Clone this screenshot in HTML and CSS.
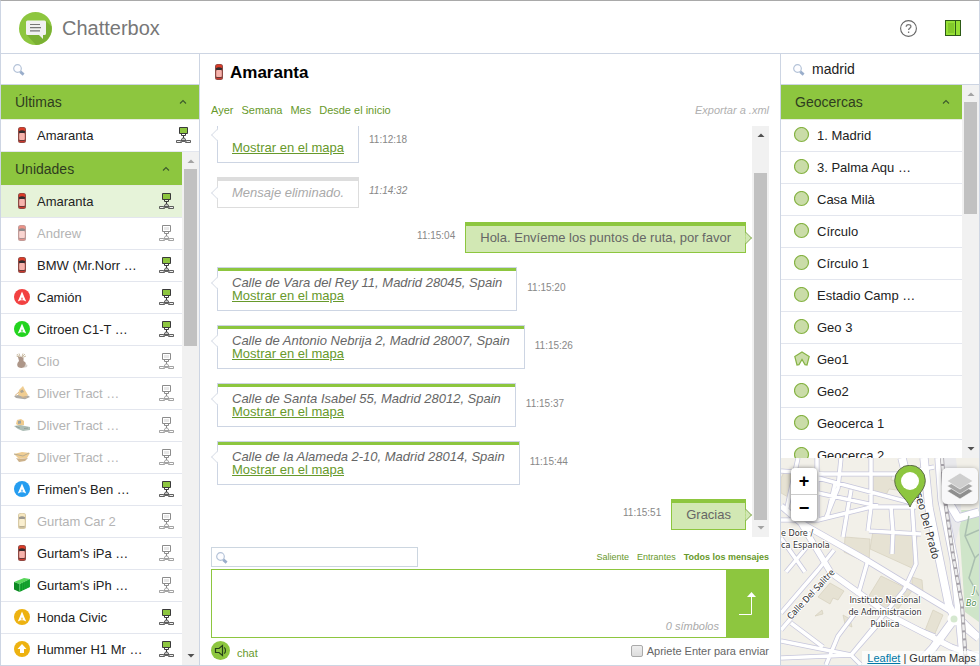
FILE: index.html
```html
<!DOCTYPE html>
<html lang="es">
  <head>
    <meta charset="UTF-8" />
    <meta name="viewport" content="width=device-width, initial-scale=1.0" />
    <title>Chatterbox</title>
    <link rel="stylesheet" href="styles.css">
  </head>
  <body>
    <!-- Icon sprite -->
    <svg class="sprite" aria-hidden="true">
      <symbol id="search" viewBox="0 0 12 12">
        <circle cx="4.5" cy="4.5" r="3.8" fill="#fdfdff" stroke="#b4c3d8" stroke-width="1.2" />
        <path d="M7.2 7.6l3.4 3" stroke="#9aaecb" stroke-width="2.8" />
      </symbol>
      <symbol id="chevron" viewBox="0 0 8 8">
        <path d="M1 5.5L4 2.5l3 3" fill="none" stroke="#3c5a2c" stroke-width="1.1" />
      </symbol>
      <symbol id="up" viewBox="0 0 8 4"><path d="M.5 4L4 .4 7.5 4z" fill="currentColor" /></symbol>
      <symbol id="down" viewBox="0 0 8 4"><path d="M.5 0h7L4 3.6z" fill="currentColor" /></symbol>
      <symbol id="car" viewBox="0 0 16 16">
        <rect x="4" y="0" width="8" height="16" rx="2.5" fill="#8d4a44" />
        <path d="M5 1.5Q8-.3 11 1.5V4H5z" fill="#dc3c28" />
        <path d="M4.8 4.2Q8 2.4 11.2 4.2L10.5 6.5h-5z" fill="#332c2e" />
        <rect x="5.2" y="6" width="5.6" height="7" rx="1" fill="#f7b3ac" />
        <path d="M5.6 13.2h4.800l.4 1H5.200z" fill="#5b3230" />
        <path d="M5.2 14.6h5.6" stroke="#d6392c" />
      </symbol>
      <symbol id="car-yellow" viewBox="0 0 16 16">
        <rect x="4" y="0" width="8" height="16" rx="2.5" fill="#b99f5c" />
        <path d="M5 1.5Q8-.3 11 1.5V4H5z" fill="#f0d58c" />
        <path d="M4.8 4.2Q8 2.4 11.2 4.2L10.5 6.5h-5z" fill="#4a4436" />
        <rect x="5.2" y="6" width="5.6" height="7" rx="1" fill="#f7e2ab" />
        <path d="M5.6 13.2h4.800l.4 1H5.200z" fill="#6d5b32" />
      </symbol>
      <symbol id="nav" viewBox="0 0 16 16">
        <circle cx="8" cy="8" r="8" fill="currentColor" />
        <path d="M8 2.6l4.200 9.800-2.800-1.200H6.600L3.800 12.400z" fill="#fff" />
        <path d="M8 8l1 2.400H7z" fill="currentColor" />
      </symbol>
      <symbol id="nav-arrow" viewBox="0 0 16 16">
        <circle cx="8" cy="8" r="8" fill="currentColor" />
        <path d="M8 3l4.5 5H10v4H6V8H3.5z" fill="#fff" />
      </symbol>
      <symbol id="deer" viewBox="0 0 16 16">
        <path d="M3 1l2 3M5 .5l1 3M11 1L8 4M9 .5l-1 3M2.500 3l3 1.500M12 3L8.500 4.500" stroke="#8a6a34" stroke-width=".8" />
        <path d="M4 4l3-.6L9.500 5v3Q13 9.500 11.500 13.500Q8 16 4 14Q2 11 5 8z" fill="#6b4127" />
        <path d="M11.500 11l2 1-.5 2-3 .8z" fill="#b5aaa0" />
      </symbol>
      <symbol id="digger" viewBox="0 0 16 16">
        <path d="M0 11l4-1 10 .5 2 1.500-5 2.200L2 13z" fill="#6d675c" />
        <path d="M4 10l1-5 4-4 2 4 3 5-5 2z" fill="#e5a63a" />
        <path d="M6 6l2.500-1.500L10 7 7 8z" fill="#675a3e" />
        <path d="M1 10.500l4-3.500M8 12h5" stroke="#bd7a20" />
      </symbol>
      <symbol id="loader" viewBox="0 0 16 16">
        <path d="M3 3l4-1 3 2v4L5 9 2 7z" fill="#e3a133" />
        <path d="M4 4l3-.6v3L4 7z" fill="#4e5b57" />
        <path d="M0 9l6-1 10 2v3L9 14 4 12z" fill="#6b8a7c" />
        <path d="M2 9.500l4 1.500M10 11.500l4-.5" stroke="#3e5148" />
      </symbol>
      <symbol id="truck" viewBox="0 0 16 16">
        <path d="M0 5l8-2 8 1-3 5-8 1z" fill="#e2a53c" />
        <path d="M0 5l9 2 6-3" fill="none" stroke="#7f6938" />
        <path d="M2 9l4 1 8-1-3 3-6 1z" fill="#a3722b" />
      </symbol>
      <symbol id="container" viewBox="0 0 16 16">
        <path d="M0 5l10-4 6 1L5.500 7z" fill="#58d65a" />
        <path d="M0 5l5.500 2v8L0 12.500z" fill="#0c8a22" />
        <path d="M5.500 7L16 2v8L5.500 15z" fill="#19aa32" />
        <path d="M7.500 6.500V14M9.700 5.500V13M11.900 4.500v7.300M14 3.500v7.300" stroke="#0f8d26" stroke-width=".7" />
      </symbol>
      <symbol id="net" viewBox="0 0 16 16">
        <path d="M3.500.5h8v6h-8z" fill="#8dc63f" stroke="#3a3a3a" />
        <path d="M5.500 7v1.500h4V7M7.500 9v2" fill="none" stroke="#3a3a3a" />
        <path d="M6.500 11h2l1.500 2.500H5z" fill="#ccc" stroke="#3a3a3a" stroke-width=".8" />
        <path d="M.5 13.500h4l1 2h-5zM14.500 13.500h-4l-1 2h5zM5.500 14.500h4" fill="#eee" stroke="#3a3a3a" stroke-width=".8" />
      </symbol>
      <symbol id="net-off" viewBox="0 0 16 16">
        <path d="M3.500.5h8v6h-8z" fill="#fff" stroke="#8c8c8c" />
        <path d="M5 2h5v3H5z" fill="#e8e8e8" />
        <path d="M5.500 7v1.500h4V7M7.500 9v2" fill="none" stroke="#8c8c8c" />
        <path d="M6.500 11h2l1.500 2.500H5z" fill="#fff" stroke="#8c8c8c" stroke-width=".8" />
        <path d="M.5 13.500h4l1 2h-5zM14.500 13.500h-4l-1 2h5zM5.500 14.500h4" fill="#fff" stroke="#8c8c8c" stroke-width=".8" />
      </symbol>
      <symbol id="circle" viewBox="0 0 16 16">
        <circle cx="7.500" cy="7.500" r="7" fill="#cadca8" stroke="#86b344" stroke-width="1.200" />
      </symbol>
      <symbol id="polygon" viewBox="0 0 16 16">
        <path d="M8 .9l7.200 4.600-2.200 8.500-2-.4L8 8.500l-3 5.100-2 .4L.8 5.500z" fill="#cadca8" stroke="#86b344" stroke-width="1.200" />
      </symbol>
    </svg>

    <div class="app">
      <header class="header">
        <svg class="header__logo" viewBox="0 0 33 33" aria-hidden="true">
          <circle cx="16.500" cy="16.500" r="16.500" fill="#8dc63f" />
          <path d="M27 9l5.500 5.500A16.500 16.500 0 0 1 17 33L7 22z" fill="#7ab033" />
          <path d="M8.500 8.500h17a1.500 1.500 0 0 1 1.500 1.500v11.500a1.500 1.500 0 0 1-1.500 1.500H24v4l-4-4H8.500A1.500 1.500 0 0 1 7 21.500V10a1.500 1.500 0 0 1 1.500-1.500z" fill="#f1f1f1" />
          <path d="M11 12.500h10M11 15.700h11M11 18.900h10" stroke="#777" stroke-width="1.200" />
        </svg>
        <h1 class="header__title">Chatterbox</h1>
        <button class="header__button" type="button" aria-label="Ayuda">
          <svg class="header__icon" viewBox="0 0 17 17">
            <circle cx="8.500" cy="8.500" r="7.900" fill="#fff" stroke="#666" stroke-width="1.100" />
            <path d="M6.200 6.800c0-3 4.700-2.900 4.700-.3 0 1.700-2.300 1.800-2.300 3.500M8.600 11.500v1.400" fill="none" stroke="#777" stroke-width="1.300" />
          </svg>
        </button>
        <button class="header__button" type="button" aria-label="Mostrar panel">
          <svg class="header__icon" viewBox="0 0 17 17">
            <rect x=".5" y=".5" width="15" height="15" fill="#96e035" stroke="#2d5a17" />
            <rect x="3" y="3" width="6" height="10" fill="#82c92b" />
            <path d="M10.500 1v15" stroke="#2d5a17" />
          </svg>
        </button>
      </header>

      <main class="columns">
        <aside class="panel">
          <label class="search">
            <svg class="search__icon"><use href="#search" /></svg>
            <input class="search__input" type="text" aria-label="Buscar unidades" />
          </label>
          <section class="section">
            <button class="section__title" type="button">Últimas <svg class="chevron"><use href="#chevron" /></svg></button>
            <ul class="list">
              <li><button class="item" type="button"><svg class="icon"><use href="#car" /></svg><span>Amaranta</span><svg class="icon"><use href="#net" /></svg></button></li>
            </ul>
          </section>
          <div class="scroll">
            <section class="section">
              <button class="section__title" type="button">Unidades <svg class="chevron"><use href="#chevron" /></svg></button>
              <ul class="list">
                <li><button class="item item--active" type="button"><svg class="icon"><use href="#car" /></svg><span>Amaranta</span><svg class="icon"><use href="#net" /></svg></button></li>
                <li><button class="item item--off" type="button"><svg class="icon"><use href="#car" /></svg><span>Andrew</span><svg class="icon"><use href="#net-off" /></svg></button></li>
                <li><button class="item" type="button"><svg class="icon"><use href="#car" /></svg><span>BMW (Mr.Norr …</span><svg class="icon"><use href="#net" /></svg></button></li>
                <li><button class="item" type="button"><svg class="icon icon--red"><use href="#nav" /></svg><span>Camión</span><svg class="icon"><use href="#net" /></svg></button></li>
                <li><button class="item" type="button"><svg class="icon icon--green"><use href="#nav" /></svg><span>Citroen C1-T …</span><svg class="icon"><use href="#net" /></svg></button></li>
                <li><button class="item item--off" type="button"><svg class="icon"><use href="#deer" /></svg><span>Clio</span><svg class="icon"><use href="#net-off" /></svg></button></li>
                <li><button class="item item--off" type="button"><svg class="icon"><use href="#digger" /></svg><span>Dliver Tract …</span><svg class="icon"><use href="#net-off" /></svg></button></li>
                <li><button class="item item--off" type="button"><svg class="icon"><use href="#loader" /></svg><span>Dliver Tract …</span><svg class="icon"><use href="#net-off" /></svg></button></li>
                <li><button class="item item--off" type="button"><svg class="icon"><use href="#truck" /></svg><span>Dliver Tract …</span><svg class="icon"><use href="#net-off" /></svg></button></li>
                <li><button class="item" type="button"><svg class="icon icon--blue"><use href="#nav" /></svg><span>Frimen's Ben …</span><svg class="icon"><use href="#net" /></svg></button></li>
                <li><button class="item item--off" type="button"><svg class="icon"><use href="#car-yellow" /></svg><span>Gurtam Car 2</span><svg class="icon"><use href="#net-off" /></svg></button></li>
                <li><button class="item" type="button"><svg class="icon"><use href="#car" /></svg><span>Gurtam's iPa …</span><svg class="icon"><use href="#net-off" /></svg></button></li>
                <li><button class="item" type="button"><svg class="icon"><use href="#container" /></svg><span>Gurtam's iPh …</span><svg class="icon"><use href="#net-off" /></svg></button></li>
                <li><button class="item" type="button"><svg class="icon icon--amber"><use href="#nav" /></svg><span>Honda Civic</span><svg class="icon"><use href="#net" /></svg></button></li>
                <li><button class="item" type="button"><svg class="icon icon--amber"><use href="#nav-arrow" /></svg><span>Hummer H1 Mr …</span><svg class="icon"><use href="#net" /></svg></button></li>
              </ul>
            </section>
            <div class="bar">
              <svg class="bar__arrow bar__arrow--end"><use href="#up" /></svg>
              <div class="bar__track"><div class="bar__thumb" style="height: 37%"></div></div>
              <svg class="bar__arrow"><use href="#down" /></svg>
            </div>
          </div>
        </aside>

        <section class="chat">
          <h2 class="chat__title"><svg class="icon"><use href="#car" /></svg>Amaranta</h2>
          <nav class="period">
            <a href="#">Ayer</a>
            <a href="#">Semana</a>
            <a href="#">Mes</a>
            <a href="#">Desde el inicio</a>
            <a class="period__export" href="#">Exportar a .xml</a>
          </nav>
          <div class="scroll">
            <div class="messages">
              <div class="message">
                <div class="bubble"><br><a href="#">Mostrar en el mapa</a></div>
                <time>11:12:18</time>
              </div>
              <div class="message message--deleted">
                <div class="bubble">Mensaje eliminado.</div>
                <time>11:14:32</time>
              </div>
              <div class="message message--own">
                <div class="bubble">Hola. Envíeme los puntos de ruta, por favor</div>
                <time>11:15:04</time>
              </div>
              <div class="message">
                <div class="bubble"><em>Calle de Vara del Rey 11, Madrid 28045, Spain</em><a href="#">Mostrar en el mapa</a></div>
                <time>11:15:20</time>
              </div>
              <div class="message">
                <div class="bubble"><em>Calle de Antonio Nebrija 2, Madrid 28007, Spain</em><a href="#">Mostrar en el mapa</a></div>
                <time>11:15:26</time>
              </div>
              <div class="message">
                <div class="bubble"><em>Calle de Santa Isabel 55, Madrid 28012, Spain</em><a href="#">Mostrar en el mapa</a></div>
                <time>11:15:37</time>
              </div>
              <div class="message">
                <div class="bubble"><em>Calle de la Alameda 2-10, Madrid 28014, Spain</em><a href="#">Mostrar en el mapa</a></div>
                <time>11:15:44</time>
              </div>
              <div class="message message--own">
                <div class="bubble">Gracias</div>
                <time>11:15:51</time>
              </div>
            </div>
            <div class="bar">
              <svg class="bar__arrow"><use href="#up" /></svg>
              <div class="bar__track bar__track--end"><div class="bar__thumb" style="height: 92%"></div></div>
              <svg class="bar__arrow bar__arrow--end"><use href="#down" /></svg>
            </div>
          </div>
          <div class="filter">
            <label class="filter__search">
              <svg class="search__icon"><use href="#search" /></svg>
              <input class="search__input" type="text" aria-label="Buscar mensajes" />
            </label>
            <a href="#">Saliente</a>
            <a href="#">Entrantes</a>
            <a class="filter__current" href="#">Todos los mensajes</a>
          </div>
          <form class="composer">
            <textarea class="composer__text" aria-label="Mensaje"></textarea>
            <span class="composer__count">0 símbolos</span>
            <button class="composer__send" type="button" aria-label="Enviar">
              <svg class="composer__arrow" viewBox="0 0 17 24">
                <path d="M0 22.500h12.500V4" fill="none" stroke="#fff" />
                <path d="M8 5L12.500 0 17 5z" fill="#fff" />
              </svg>
            </button>
          </form>
          <footer class="footer">
            <button class="footer__sound" type="button" aria-label="Sonido">
              <svg viewBox="0 0 19 19">
                <path d="M4.500 7.500h3.500l3.500-3v10l-3.500-3H4.500zM13 6.500c2 .6 2 5.400 0 6" fill="none" stroke="#26401a" stroke-width="1.200" />
              </svg>
            </button>
            <a href="#">chat</a>
            <label class="footer__enter"><input type="checkbox" />Apriete Enter para enviar</label>
          </footer>
        </section>

        <aside class="panel panel--right">
          <label class="search">
            <svg class="search__icon"><use href="#search" /></svg>
            <input class="search__input" type="text" value="madrid" aria-label="Buscar geocercas" />
          </label>
          <div class="scroll">
            <section class="section">
              <button class="section__title" type="button">Geocercas <svg class="chevron"><use href="#chevron" /></svg></button>
              <ul class="list">
                <li><button class="item" type="button"><svg class="icon"><use href="#circle" /></svg><span>1. Madrid</span></button></li>
                <li><button class="item" type="button"><svg class="icon"><use href="#circle" /></svg><span>3. Palma Aqu …</span></button></li>
                <li><button class="item" type="button"><svg class="icon"><use href="#circle" /></svg><span>Casa Milà</span></button></li>
                <li><button class="item" type="button"><svg class="icon"><use href="#circle" /></svg><span>Círculo</span></button></li>
                <li><button class="item" type="button"><svg class="icon"><use href="#circle" /></svg><span>Círculo 1</span></button></li>
                <li><button class="item" type="button"><svg class="icon"><use href="#circle" /></svg><span>Estadio Camp …</span></button></li>
                <li><button class="item" type="button"><svg class="icon"><use href="#circle" /></svg><span>Geo 3</span></button></li>
                <li><button class="item" type="button"><svg class="icon"><use href="#polygon" /></svg><span>Geo1</span></button></li>
                <li><button class="item" type="button"><svg class="icon"><use href="#circle" /></svg><span>Geo2</span></button></li>
                <li><button class="item" type="button"><svg class="icon"><use href="#circle" /></svg><span>Geocerca 1</span></button></li>
                <li><button class="item" type="button"><svg class="icon"><use href="#circle" /></svg><span>Geocerca 2</span></button></li>
              </ul>
            </section>
            <div class="bar">
              <svg class="bar__arrow bar__arrow--end"><use href="#up" /></svg>
              <div class="bar__track"><div class="bar__thumb" style="height: 33%"></div></div>
              <svg class="bar__arrow"><use href="#down" /></svg>
            </div>
          </div>

          <div class="map">
            <svg class="map__tiles" viewBox="0 0 198 207" preserveAspectRatio="xMidYMid slice">
              <rect width="198" height="207" fill="#f2f0e9" />
              <path d="M177 52h21v112l-14-10z" fill="#cfe5c9" />
              <path d="M160 0h15l6 60-8 30z" fill="#e9e9ec" />
              <!-- Buildings -->
              <g fill="#e6e2d3" stroke="#d6d0bd" stroke-width=".7">
                <path d="M91 18l20-2-1 6 8 1-2 9-8-1-3 6-13-2z" />
                <path d="M92 73l44 4-3 34-44-20z" />
                <path d="M64 79l25 2-1 25-25-12z" />
                <path d="M100 118l31 15-18 23-27-15z" />
                <path d="M49 125l14 8-6 9-5-2-3 6-12-7z" />
                <path d="M62 157l7 4 2 8-7-3z" />
                <path d="M41 152l-7 6 8-2z" />
                <path d="M152 152l10 5-10 23-9-5z" />
                <path d="M131 119l10 3 1 12-11-4z" />
                <path d="M4 12l9 2-6 25-7-4V20z" />
              </g>
              <!-- Street casing -->
              <g fill="none" stroke="#c6c6dc" stroke-linejoin="round">
                <path stroke-width="5" d="M0 13l43 3h74l36-7M17 0L5 54M36 0v60M60 0l-3 30-12 30M90 0v49l-3 24M37 20l98 26M37 35l60 13M0 62h37l53-13h45M70 32l-8 47M54 26l-8 34M110 49l2 25M88 73l52 3M131 46l4 60-12 26-53 65M0 155l37-43 16-20M0 172l47-55M10 165l32 24M0 183l70 14 30-34M0 200l70-3 10 10M87 102l-10 35M75 154l-18 24-12 29M112 74l-1 22M0 80l24 34M124 166l30 12M25 90l-20 24" />
                <path stroke-width="7" d="M0 48l20 17 67 38 46 28 40 24 25 24M20 65l30 50 60 43 60 31 28 10" />
                <path stroke-width="9" d="M143 0l5 50 20 98 6 12-22 30-16 17M158 0l3 42 12 60 10 105M121 0l11 44M173 160l25 20M165 40l12 20 21-6" />
              </g>
              <!-- Streets -->
              <g fill="none" stroke="#fff" stroke-linejoin="round">
                <path stroke-width="3.500" d="M0 13l43 3h74l36-7M17 0L5 54M36 0v60M60 0l-3 30-12 30M90 0v49l-3 24M37 20l98 26M37 35l60 13M0 62h37l53-13h45M70 32l-8 47M54 26l-8 34M110 49l2 25M88 73l52 3M131 46l4 60-12 26-53 65M0 155l37-43 16-20M0 172l47-55M10 165l32 24M0 183l70 14 30-34M0 200l70-3 10 10M87 102l-10 35M75 154l-18 24-12 29M112 74l-1 22M0 80l24 34M124 166l30 12M25 90l-20 24" />
                <path stroke-width="5.500" d="M0 48l20 17 67 38 46 28 40 24 25 24M20 65l30 50 60 43 60 31 28 10" />
                <path stroke-width="7.500" d="M143 0l5 50 20 98 6 12-22 30-16 17M158 0l3 42 12 60 10 105M121 0l11 44M173 160l25 20M165 40l12 20 21-6" />
              </g>
              <circle cx="173" cy="161" r="5" fill="#d5e8cf" stroke="#fff" stroke-width="3" />
              <path d="M161 0l3 42 8 55 9 50 4 60" fill="none" stroke="#a5a1a8" stroke-width="4" />
              <path d="M161 0l3 42 8 55 9 50 4 60" fill="none" stroke="#eee" stroke-width="2.500" stroke-dasharray="6 2" />
              <path d="M188 58l-4 20 10 22-6 20 10 18M184 78l14-6M194 100l4-4" fill="none" stroke="#aabfb0" stroke-width="1.500" />
              <g class="map__labels">
                <text x="0" y="78">e Dore /</text>
                <text x="0" y="90">ca Espanola</text>
                <text x="104" y="145" text-anchor="middle">Instituto Nacional</text>
                <text x="104" y="157" text-anchor="middle">de Administracion</text>
                <text x="104" y="169" text-anchor="middle">Publica</text>
                <text transform="translate(10 162) rotate(-47)">Calle Del Salitre</text>
                <text class="map__avenue" transform="translate(134 36) rotate(75)">seo Del Prado</text>
                <text class="map__park" x="192" y="135">J</text>
                <text class="map__park" x="185" y="148">Bo</text>
              </g>
            </svg>
            <div class="map__zoom">
              <button type="button" aria-label="Acercar">+</button>
              <button type="button" aria-label="Alejar">−</button>
            </div>
            <button class="map__layers" type="button" aria-label="Capas">
              <svg viewBox="0 0 26 26">
                <path d="M13 11l13 7-13 8-13-8z" fill="#8e8e8e" stroke="#fff" stroke-width=".6" />
                <path d="M13 6l13 7-13 8-13-8z" fill="#a7a7a7" stroke="#fff" stroke-width=".6" />
                <path d="M13 0l13 8-13 8L0 8z" fill="#cfcfcf" stroke="#fff" stroke-width=".6" />
              </svg>
            </button>
            <svg class="map__pin" viewBox="0 0 32 43">
              <path d="M16 42C13 33 .7 27 .7 15.500a15.300 15.300 0 0 1 30.600 0C31.300 27 19 33 16 42z" fill="#8dc63f" stroke="#5d6b4a" />
              <circle cx="16" cy="16" r="9" fill="#fff" />
            </svg>
            <div class="map__credit"><a href="#">Leaflet</a> | Gurtam Maps</div>
          </div>
        </aside>
      </main>
    </div>
  </body>
</html>
```

FILE: styles.css
```css
* {
  box-sizing: border-box;
}

body {
  margin: 0;
  font-family: "Liberation Sans", Arial, sans-serif;
  font-size: 13px;
  color: #222;
  background: #fff;
}

button,
input,
textarea {
  padding: 0;
  border: none;
  background: none;
  font: inherit;
  color: inherit;
  outline: none;
}

button {
  cursor: pointer;
}

a {
  color: #67992b;
  text-decoration: none;
}

svg {
  display: block;
  flex: none;
}

.sprite {
  position: absolute;
  width: 0;
  height: 0;
}

.app {
  display: flex;
  flex-direction: column;
  height: 100vh;
  border: 1px solid #cdd5e3;
  border-top-color: #a9a9a9;
}

/* Header */
.header {
  display: flex;
  align-items: center;
  flex: none;
  height: 53px;
  padding: 2px 17px 0 18px;
  border-bottom: 1px solid #cdd5e3;
}

.header__logo {
  width: 33px;
  height: 33px;
}

.header__title {
  flex: 1;
  margin: 0 0 0 10px;
  font-size: 20px;
  font-weight: normal;
  color: #777;
}

.header__button {
  margin-left: 28px;
}

.header__icon {
  width: 17px;
  height: 17px;
}

.columns {
  display: grid;
  grid-template-columns: 199px 1fr 199px;
  flex: 1;
  min-height: 0;
}

/* Side panels */
.panel {
  display: flex;
  flex-direction: column;
  min-height: 0;
  border-right: 1px solid #cdd5e3;
}

.panel--right {
  border-right: none;
  border-left: 1px solid #cdd5e3;
}

.search {
  display: flex;
  align-items: center;
  flex: none;
  gap: 7px;
  height: 31px;
  padding-left: 12px;
  border-bottom: 1px solid #cdd5e3;
}

.search__icon {
  width: 12px;
  height: 12px;
  margin-top: 2px;
}

.search__input {
  flex: 1;
  min-width: 0;
  font-size: 14px;
}

.section {
  flex: 1;
  min-width: 0;
}

.panel > .section {
  flex: none;
}

.section__title {
  display: flex;
  align-items: center;
  justify-content: space-between;
  width: 100%;
  height: 34px;
  padding: 0 12px 0 14px;
  background: #8dc63f;
  border-bottom: 1px solid #e6ebdf;
  font-size: 14px;
  color: #2f3d20;
}

.search + * .section__title,
.search + .section .section__title {
  height: 35px;
}

.chevron {
  width: 8px;
  height: 8px;
}

.list {
  margin: 0;
  padding: 0;
  list-style: none;
}

.item {
  display: flex;
  align-items: center;
  gap: 7px;
  width: 100%;
  height: 32px;
  padding: 0 7px 0 13px;
  border-bottom: 1px solid #e3e6ee;
  text-align: left;
  white-space: nowrap;
}

.item span {
  flex: 1;
}

.item--active {
  background: #e6f3d9;
}

.item--off {
  color: #b4b4b4;
}

.item--off .icon:first-child {
  opacity: 0.55;
}

.icon {
  width: 16px;
  height: 16px;
  margin-bottom: 2px;
}

.icon--red {
  color: #f24141;
}

.icon--green {
  color: #23d41f;
}

.icon--blue {
  color: #259df0;
}

.icon--amber {
  color: #edb211;
}

/* Scroll areas */
.scroll {
  display: flex;
  flex: 1;
  min-height: 0;
  overflow: hidden;
}

.bar {
  display: flex;
  flex-direction: column;
  align-items: center;
  justify-content: space-between;
  flex: none;
  width: 17px;
  padding: 7px 0;
  background: #f1f1f1;
}

.bar__track {
  flex: 1;
  width: 13px;
  margin: 6px 0;
}

.bar__track--end {
  display: flex;
  align-items: flex-end;
}

.bar__thumb {
  width: 100%;
  background: #c1c1c1;
}

.bar__arrow {
  width: 8px;
  height: 4px;
  color: #505050;
}

.bar__arrow--end {
  color: #a3a3a3;
}

/* Chat */
.chat {
  display: flex;
  flex-direction: column;
  min-width: 0;
  min-height: 0;
  padding: 0 11px 5px;
}

.chat__title {
  display: flex;
  align-items: center;
  gap: 3px;
  height: 37px;
  margin: 0;
  font-size: 17px;
  color: #000;
}

.period {
  display: flex;
  align-items: center;
  gap: 8px;
  height: 35px;
  padding-top: 2px;
  font-size: 11px;
}

.period__export {
  margin-left: auto;
  font-style: italic;
  color: #b0b0b0;
}

.messages {
  display: flex;
  flex-direction: column;
  justify-content: flex-end;
  flex: 1;
  gap: 14px;
  padding: 0 6px 7px;
  overflow: hidden;
}

.message {
  display: flex;
  align-items: center;
  flex: none;
  gap: 10px;
}

.message time {
  padding-bottom: 4px;
  font-size: 10px;
  color: #888;
}

.bubble {
  position: relative;
  padding: 8px 14px;
  border: 1px solid #cdd5e3;
  box-shadow: inset 0 3px #8dc63f;
  background: #fff;
  line-height: 13px;
  color: #666;
}

.bubble em,
.bubble a {
  display: block;
}

.bubble a {
  text-decoration: underline;
}

.bubble::before {
  content: "";
  position: absolute;
  top: 10px;
  left: -5px;
  width: 8px;
  height: 8px;
  border: 1px solid #dde2ea;
  border-top-color: transparent;
  border-right-color: transparent;
  background: linear-gradient(45deg, #fff 50%, transparent 50%);
  transform: rotate(45deg);
}

.message--deleted {
  font-style: italic;
}

.message--deleted .bubble {
  border-color: #ddd;
  box-shadow: inset 0 3px #ddd;
  color: #aaa;
}

.message--own {
  flex-direction: row-reverse;
}

.message--own .bubble {
  border-color: #8dc63f;
  background: #d2e8b4;
}

.message--own .bubble::before {
  left: auto;
  right: -5px;
  border: 1px solid #8fb55f;
  border-bottom-color: transparent;
  border-left-color: transparent;
  background: linear-gradient(225deg, #d2e8b4 50%, transparent 50%);
}

.filter {
  display: flex;
  align-items: center;
  gap: 8px;
  margin: 10px 0 2px;
  font-size: 9px;
}

.filter__search {
  display: flex;
  align-items: center;
  width: 207px;
  height: 20px;
  margin-right: auto;
  padding: 0 4px;
  border: 1px solid #ccd6e0;
}

.filter__current {
  font-weight: bold;
}

.composer {
  position: relative;
  display: flex;
  flex: none;
  height: 69px;
  border: 1px solid #8dc63f;
}

.composer__text {
  flex: 1;
  padding: 6px;
  resize: none;
}

.composer__count {
  position: absolute;
  right: 49px;
  bottom: 5px;
  font-size: 11px;
  font-style: italic;
  color: #aaa;
}

.composer__send {
  display: grid;
  place-content: center;
  width: 42px;
  background: #8dc63f;
}

.composer__arrow {
  width: 17px;
  height: 24px;
}

.footer {
  display: flex;
  align-items: center;
  gap: 7px;
  margin-top: 3px;
  font-size: 11px;
}

.footer__sound {
  width: 19px;
  height: 19px;
  border-radius: 50%;
  background: #8dc63f;
}

.footer a {
  padding-top: 4px;
}

.footer__enter {
  display: flex;
  align-items: center;
  gap: 4px;
  margin-left: auto;
  color: #666;
}

.footer__enter input {
  appearance: none;
  width: 12px;
  height: 12px;
  margin: 0;
  border: 1px solid #aaa;
  border-radius: 2px;
  background: linear-gradient(#eee, #ddd);
}

/* Map */
.map {
  position: relative;
  flex: none;
  height: 207px;
  overflow: hidden;
}

.map__tiles {
  width: 100%;
  height: 100%;
}

.map__labels {
  font-family: "DejaVu Sans Condensed", "Open Sans", sans-serif;
  font-size: 9px;
  fill: #333;
  stroke: #fff;
  stroke-width: 2px;
  paint-order: stroke;
}

.map__avenue {
  font-size: 11px;
}

.map__park {
  font-style: italic;
  fill: #4a8a4a;
}

.map__zoom {
  position: absolute;
  top: 10px;
  left: 10px;
  display: flex;
  flex-direction: column;
  width: 26px;
  border-radius: 4px;
  background: #fff;
  box-shadow: 0 1px 5px rgba(0, 0, 0, 0.65);
}

.map__zoom button {
  height: 26px;
  font-size: 18px;
  font-weight: bold;
  line-height: 26px;
  color: #000;
}

.map__zoom button:first-child {
  height: 27px;
  border-bottom: 1px solid #ccc;
}

.map__layers {
  position: absolute;
  top: 10px;
  right: 1px;
  display: grid;
  place-content: center;
  width: 36px;
  height: 36px;
  border-radius: 5px;
  background: #f8f8f9;
  box-shadow: 0 1px 5px rgba(0, 0, 0, 0.4);
}

.map__layers svg {
  width: 26px;
  height: 26px;
}

.map__pin {
  position: absolute;
  top: 7px;
  left: 57%;
  width: 32px;
  height: 43px;
}

.map__credit {
  position: absolute;
  right: 0;
  bottom: 0;
  padding: 0 3px 0 5px;
  background: rgba(255, 255, 255, 0.7);
  font-size: 11px;
  line-height: 14px;
  color: #333;
}

.map__credit a {
  color: #0078a8;
  text-decoration: underline;
}
```
